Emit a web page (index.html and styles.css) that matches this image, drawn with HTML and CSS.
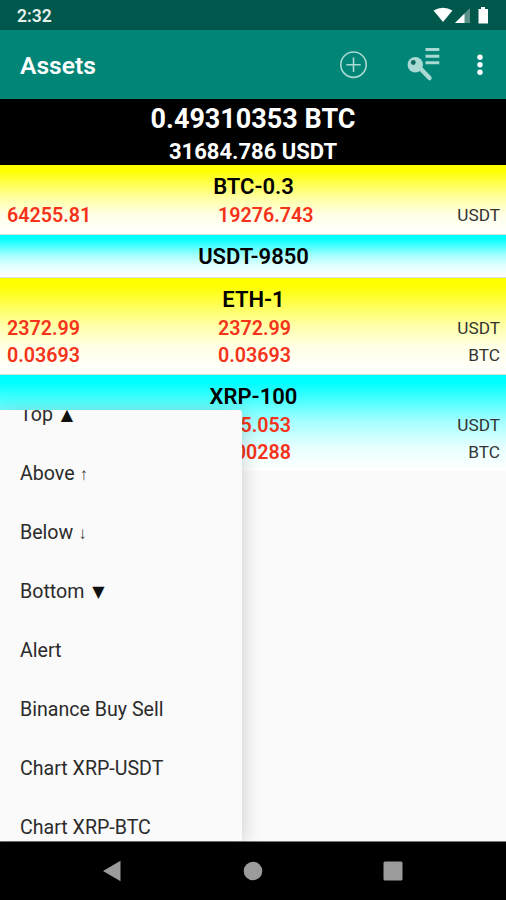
FILE: index.html
```
<!DOCTYPE html>
<html lang="en">
<head>
    <meta charset="UTF-8">
    <meta name="viewport" content="width=device-width, initial-scale=1.0">
    <title>Assets</title>
    <link rel="stylesheet" href="styles.css">
</head>
<body>
    <div class="status-bar">
        <span class="clock">2:32</span>
        <svg class="status-icons" width="60" height="20" viewBox="0 0 60 20">
            <path d="M0.5 4.6Q10 -1.2 19.5 4.6L10 16Z" fill="#fff"/>
            <path d="M22 17L37 2V17Z" fill="#fff" fill-opacity="0.35"/>
            <path d="M22 17L31.5 7.5V17Z" fill="#fff"/>
            <path d="M48 1h4v2h3v14.5H45.500V3H48Z" fill="#fff"/>
        </svg>
    </div>

    <header class="app-bar">
        <h1>Assets</h1>
        <svg class="icon-add" width="30" height="30" viewBox="0 0 30 30" fill="none" stroke="#a9d9d3" stroke-width="1.6">
            <circle cx="15.500" cy="14.700" r="12.700"/>
            <path d="M15.500 7.500V21.900M8.300 14.700H22.700"/>
        </svg>
        <svg class="icon-key" width="34" height="36" viewBox="0 0 34 36">
            <path d="M12 20L22.500 31" stroke="#a9d9d3" stroke-width="4.500" stroke-linecap="round"/>
            <circle cx="8.300" cy="17.800" r="7.700" fill="#a9d9d3"/>
            <circle cx="6.300" cy="15.500" r="2.400" fill="#14695f"/>
            <path d="M18.500 2.500H32.300M18.500 9.300H32.300M18.500 15.800H32.300" stroke="#a9d9d3" stroke-width="3"/>
        </svg>
        <svg class="icon-more" width="6" height="22" viewBox="0 0 6 22" fill="#fff">
            <circle cx="3" cy="3.200" r="2.700"/>
            <circle cx="3" cy="10.700" r="2.700"/>
            <circle cx="3" cy="18.200" r="2.700"/>
        </svg>
    </header>

    <div class="total">
        <div class="total-btc">0.49310353 BTC</div>
        <div class="total-usdt">31684.786 USDT</div>
    </div>

    <main class="assets">
        <section class="asset yellow">
            <h2>BTC-0.3</h2>
            <div class="row"><b>64255.81</b><b>19276.743</b><span>USDT</span></div>
        </section>
        <section class="asset cyan">
            <h2>USDT-9850</h2>
        </section>
        <section class="asset yellow">
            <h2>ETH-1</h2>
            <div class="row"><b>2372.99</b><b>2372.99</b><span>USDT</span></div>
            <div class="row"><b>0.03693</b><b>0.03693</b><span>BTC</span></div>
        </section>
        <section class="asset cyan">
            <h2>XRP-100</h2>
            <div class="row"><b></b><b>185.053</b><span>USDT</span></div>
            <div class="row"><b></b><b>0.00288</b><span>BTC</span></div>
        </section>

        <div class="menu-clip">
            <ul class="menu">
                <li>Top <i class="tri">▲</i></li>
                <li>Above <i class="arrow">↑</i></li>
                <li>Below <i class="arrow">↓</i></li>
                <li>Bottom <i class="tri">▼</i></li>
                <li>Alert</li>
                <li>Binance Buy Sell</li>
                <li>Chart XRP-USDT</li>
                <li>Chart XRP-BTC</li>
            </ul>
        </div>
    </main>

    <nav class="nav-bar">
        <svg width="20" height="22" viewBox="0 0 20 22" fill="#9b9b9b"><path d="M1 11L18.500 0.800V21.200Z"/></svg>
        <svg width="20" height="20" viewBox="0 0 20 20" fill="#9b9b9b"><circle cx="10" cy="10" r="9.300"/></svg>
        <svg width="20" height="20" viewBox="0 0 20 20" fill="#9b9b9b"><rect x="0.500" y="0.500" width="19" height="19" rx="1.500"/></svg>
    </nav>
</body>
</html>
```
FILE: styles.css
```
* {
    box-sizing: border-box;
}
body {
    font-family: Roboto, sans-serif;
    background: #fafafa;
    width: 506px;
    height: 900px;
    margin: 0;
    display: flex;
    flex-direction: column;
    overflow: hidden;
}
.status-bar {
    height: 30px;
    flex: none;
    background: #00574b;
    color: #e6f0ee;
    display: flex;
    justify-content: space-between;
    align-items: center;
    padding: 2px 13px 0 17px;
}
.clock {
    font-size: 17.5px;
    font-weight: 600;
}
.app-bar {
    height: 69px;
    flex: none;
    background: #008577;
    color: #fff;
    display: flex;
    align-items: center;
    padding: 0 23px 0 20px;
}
.app-bar h1 {
    font-size: 24.600px;
    font-weight: 600;
    margin: 1px auto 0 0;
}
.icon-add {
    margin-right: 39px;
}
.icon-key {
    margin-right: 36px;
}
.total {
    height: 66px;
    flex: none;
    background: #000;
    color: #fff;
    font-weight: 700;
    text-align: center;
    padding-top: 2px;
}
.total-btc {
    font-size: 27px;
    line-height: 36px;
}
.total-usdt {
    font-size: 22px;
    line-height: 29px;
}
.assets {
    flex: 1;
    position: relative;
}
.asset {
    padding: 8px 6px 6px 7px;
    border-bottom: 1px solid #d5e3df;
}
.asset:nth-child(4) {
    border-bottom: none;
}
.yellow {
    background: linear-gradient(#ffff00 8%, #ffffa4 48%, #ffffe6 72%, #ffffff);
}
.cyan {
    background: linear-gradient(#00ffff 8%, #a4ffff 48%, #e6ffff 75%, #ffffff);
}
.asset h2 {
    font-size: 22px;
    font-weight: 600;
    line-height: 28px;
    text-align: center;
    margin: 0;
}
.row {
    display: grid;
    grid-template-columns: 211px 1fr auto;
    height: 27px;
    line-height: 29px;
}
.row b {
    font-size: 19.700px;
    font-weight: 600;
    color: #f5331a;
}
.row span {
    font-size: 17.200px;
    color: #333;
}
/* popup is scrolled, so the first item is cut at the top */
.menu-clip {
    position: absolute;
    left: 0;
    top: 245px;
    bottom: 0;
    width: 242px;
    background: #fafafa;
    border-radius: 0 3px 0 0;
    box-shadow: 0 3px 20px rgba(0, 0, 0, 0.2);
    overflow: hidden;
}
.menu {
    list-style: none;
    margin: -25px 0 0;
    padding: 0;
}
.menu li {
    height: 59px;
    line-height: 59px;
    padding-left: 20px;
    font-size: 19.600px;
    color: #2b2b2b;
}
.menu i {
    font-style: normal;
}
.tri {
    font-family: "DejaVu Sans", sans-serif;
    font-size: 16px;
    line-height: 1;
    vertical-align: 1px;
    margin-left: 3px;
    color: #111;
}
.arrow {
    font-family: "Liberation Serif", serif;
    font-size: 17px;
    line-height: 1;
    color: #444;
}
.nav-bar {
    height: 59px;
    flex: none;
    background: #000;
    border-top: 1px solid #777;
    display: flex;
    justify-content: space-between;
    align-items: center;
    padding: 0 103px 0 102px;
}
```
